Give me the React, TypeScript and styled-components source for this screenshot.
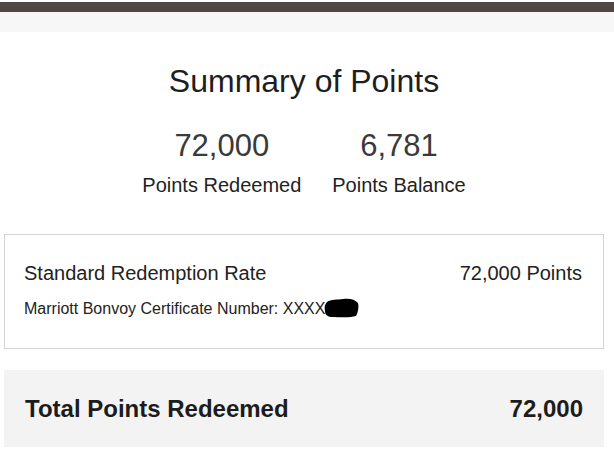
import styled, { createGlobalStyle } from "styled-components"

const GlobalStyle = createGlobalStyle`
    html, body {
        margin: 0;
        padding: 0;
        background: #ffffff;
        font-family: "Liberation Sans", Arial, sans-serif;
    }
`

const TopBar = styled.div`
    height: 10px;
    margin-top: 2px;
    background: #534646;
`

const SubBand = styled.div`
    height: 20px;
    background: #f7f7f8;
`

const Main = styled.div`
    padding: 0 10px 0 4px;
`

const Title = styled.h1`
    margin: 31px 0 0;
    font-size: 32px;
    line-height: 36px;
    font-weight: 400;
    text-align: center;
    color: #1e1e1e;
`

const Stats = styled.div`
    display: flex;
    justify-content: center;
    gap: 31px;
    margin-top: 30px;
`

const Stat = styled.div`
    display: flex;
    flex-direction: column;
    align-items: center;
`

const StatValue = styled.div`
    font-size: 31px;
    line-height: 34px;
    color: #3a3a3a;
`

const StatLabel = styled.div`
    margin-top: 10px;
    font-size: 20px;
    line-height: 24px;
    color: #222222;
`

const Card = styled.div`
    margin-top: 37px;
    border: 1px solid #d4d4d4;
    padding: 26px 21px 29px 19px;
`

const CardRow = styled.div`
    display: flex;
    justify-content: space-between;
    font-size: 20px;
    line-height: 24px;
    color: #222222;
`

const Certificate = styled.div`
    margin-top: 14px;
    font-size: 16px;
    line-height: 20px;
    color: #222222;
    display: flex;
    align-items: center;
`

const Redaction = styled.svg`
    margin-left: -2px;
    margin-top: -2px;
`

const TotalBar = styled.div`
    margin-top: 21px;
    background: #f3f3f3;
    padding: 25px 21px 24px 21px;
    display: flex;
    justify-content: space-between;
    font-size: 24px;
    line-height: 28px;
    font-weight: 700;
    color: #1c1c1c;
`

const App = () => {
    return (
        <>
            <GlobalStyle />
            <TopBar />
            <SubBand />
            <Main>
                <Title>Summary of Points</Title>
                <Stats>
                    <Stat>
                        <StatValue>72,000</StatValue>
                        <StatLabel>Points Redeemed</StatLabel>
                    </Stat>
                    <Stat>
                        <StatValue>6,781</StatValue>
                        <StatLabel>Points Balance</StatLabel>
                    </Stat>
                </Stats>
                <Card>
                    <CardRow>
                        <span>Standard Redemption Rate</span>
                        <span>72,000 Points</span>
                    </CardRow>
                    <Certificate>
                        Marriott Bonvoy Certificate Number: XXXX
                        <Redaction width="36" height="20" viewBox="0 0 36 20">
                            <path
                                d="M4 4 C8 1 14 2 20 1 C26 0 32 1 35 5 C36 9 35 15 33 18 C27 20 18 19 10 19 C5 19 2 17 2 13 C1 9 2 6 4 4 Z"
                                fill="#000000"
                            />
                        </Redaction>
                    </Certificate>
                </Card>
                <TotalBar>
                    <span>Total Points Redeemed</span>
                    <span>72,000</span>
                </TotalBar>
            </Main>
        </>
    )
}

export default App
